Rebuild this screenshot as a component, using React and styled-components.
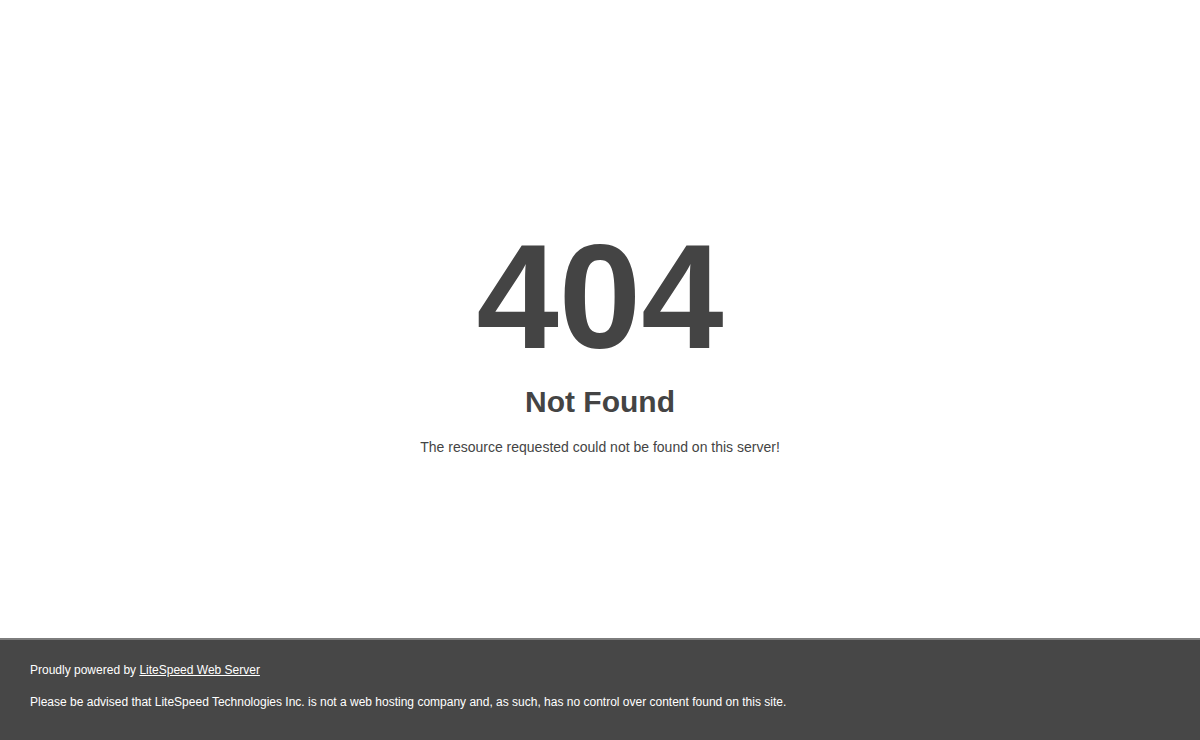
import React from 'react';
import styled, { createGlobalStyle } from 'styled-components';

const GlobalStyle = createGlobalStyle`
  html, body, #root {
    margin: 0;
    padding: 0;
    height: 100%;
  }
  body {
    background: #fff;
    font-family: "Liberation Sans", Arial, Helvetica, sans-serif;
    color: #444;
  }
`;

const Page = styled.div`
  display: flex;
  flex-direction: column;
  height: 100vh;
`;

const Main = styled.main`
  flex: 1;
  display: flex;
  flex-direction: column;
  align-items: center;
  padding-top: 223px;
  box-sizing: border-box;
`;

const Code = styled.h1`
  margin: 0;
  font-size: 148px;
  line-height: 1;
  font-weight: bold;
  color: #444;
`;

const Title = styled.h2`
  margin: 16px 0 0;
  font-size: 30px;
  line-height: 1;
  font-weight: bold;
  color: #444;
`;

const Message = styled.p`
  margin: 23px 0 0;
  font-size: 14px;
  line-height: 1;
  color: #444;
`;

const Footer = styled.footer`
  background: #474747;
  border-top: 2px solid #7d7d7d;
  padding: 24px 30px 32px;
  display: flex;
  flex-direction: column;
  gap: 20px;
  color: #fff;
  font-size: 12px;
  line-height: 1;
`;

const FooterLine = styled.p`
  margin: 0;
  a {
    color: #fff;
    text-decoration: underline;
  }
`;

export default function App() {
  return (
    <Page>
      <GlobalStyle />
      <Main>
        <Code>404</Code>
        <Title>Not Found</Title>
        <Message>The resource requested could not be found on this server!</Message>
      </Main>
      <Footer>
        <FooterLine>
          Proudly powered by <a href="#">LiteSpeed Web Server</a>
        </FooterLine>
        <FooterLine>
          Please be advised that LiteSpeed Technologies Inc. is not a web hosting company and, as such, has no control over content found on this site.
        </FooterLine>
      </Footer>
    </Page>
  );
}
